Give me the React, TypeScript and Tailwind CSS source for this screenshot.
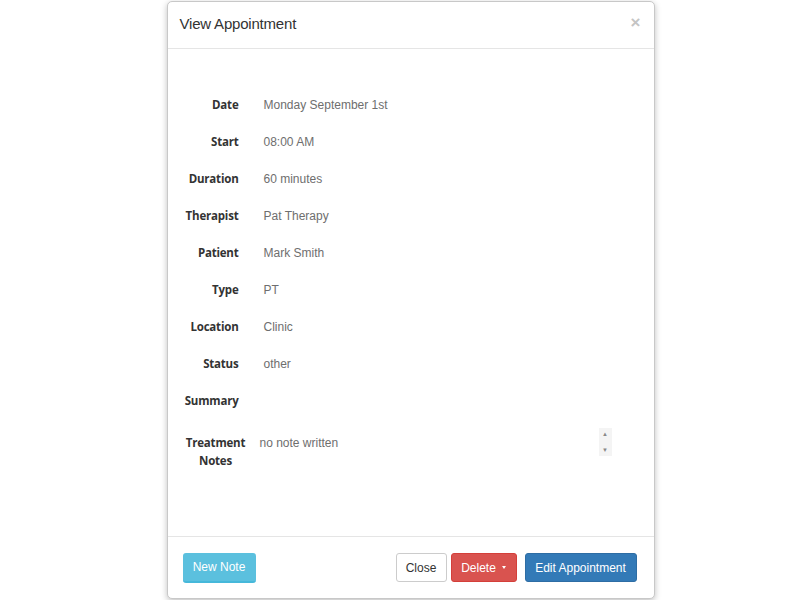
import React from "react";

const rows: { label: string; value: string }[] = [
  { label: "Date", value: "Monday September 1st" },
  { label: "Start", value: "08:00 AM" },
  { label: "Duration", value: "60 minutes" },
  { label: "Therapist", value: "Pat Therapy" },
  { label: "Patient", value: "Mark Smith" },
  { label: "Type", value: "PT" },
  { label: "Location", value: "Clinic" },
  { label: "Status", value: "other" },
  { label: "Summary", value: "" },
];

export default function App() {
  return (
    <div className="w-[800px] h-[600px] bg-white flex justify-center pt-[1px] font-['Liberation_Sans',Arial,sans-serif]">
      <div className="w-[488px] h-[598px] ml-[21px] flex flex-col bg-white border border-[#c8c8c8] rounded-[5px] shadow-[0_2px_6px_rgba(0,0,0,0.25)]">
        {/* header */}
        <div className="h-[47px] flex items-center justify-between pl-[12px] pr-[13px] border-b border-[#e5e5e5]">
          <h4 className="text-[15px] text-[#333] tracking-[-0.2px] -mt-[2px]">View Appointment</h4>
          <span className="text-[17px] font-bold text-[#c4c4c4] leading-none -mt-[6px]">×</span>
        </div>

        {/* body */}
        <div className="flex-1 pt-[37px] pl-[8px] pr-[42px]">
          {rows.map((r) => (
            <div key={r.label} className="h-[37px] flex items-center">
              <div className="w-[63px] text-right text-[11.5px] font-bold text-[#333] tracking-[-0.2px] font-['Open_Sans',sans-serif]">
                {r.label}
              </div>
              <div className="pl-[25px] text-[12px] text-[#6e6e6e]">{r.value}</div>
            </div>
          ))}
          <div className="flex mt-[15px]">
            <div className="w-[76px] ml-[2px] text-center text-[11.5px] font-bold text-[#333] leading-[18px] tracking-[-0.2px] font-['Open_Sans',sans-serif]">
              <div>Treatment</div>
              <div>Notes</div>
            </div>
            <div className="flex-1 ml-[6px] flex justify-between">
              <div className="text-[12px] text-[#6e6e6e] leading-[18px]">no note written</div>
              <div className="w-[13px] h-[28px] -mt-[6px] bg-[#f4f4f4] flex flex-col items-center justify-between py-[3px] text-[6px] text-[#888] leading-none">
                <span>▲</span>
                <span>▼</span>
              </div>
            </div>
          </div>
        </div>

        {/* footer */}
        <div className="h-[62px] border-t border-[#e5e5e5] flex items-center justify-between pl-[15px] pr-[17px]">
          <button className="h-[30px] w-[73px] bg-[#5bc0de] border-b-2 border-[#46b8da] text-white text-[12px] rounded-[3px]">
            New Note
          </button>
          <div className="flex gap-[4px]">
            <button className="h-[29px] w-[51px] bg-white border border-[#ccc] text-[#333] text-[12px] rounded-[3px]">
              Close
            </button>
            <button className="h-[29px] w-[66px] bg-[#d9534f] border border-[#d43f3a] text-white text-[12px] rounded-[3px] flex items-center justify-center gap-[6px]">
              Delete
              <span className="w-0 h-0 border-l-[2px] border-r-[2px] border-t-[3px] border-l-transparent border-r-transparent border-t-white" />
            </button>
            <button className="ml-[4px] h-[29px] w-[112px] bg-[#337ab7] border border-[#2e6da4] text-white text-[12px] rounded-[3px]">
              Edit Appointment
            </button>
          </div>
        </div>
      </div>
    </div>
  );
}
